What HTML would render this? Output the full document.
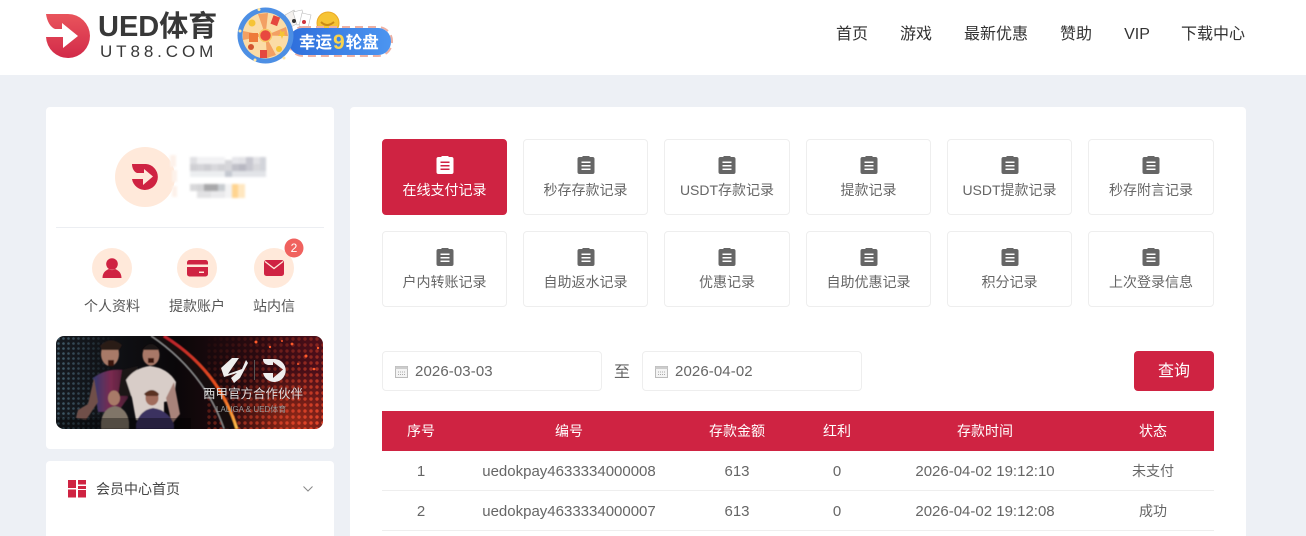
<!DOCTYPE html>
<html lang="zh-CN">
<head>
<meta charset="utf-8">
<title>UED体育</title>
<style>
*{box-sizing:border-box;margin:0;padding:0}
html,body{width:1306px;height:536px;overflow:hidden;background:#edf0f5;font-family:"Liberation Sans","Noto Sans CJK SC",sans-serif;color:#666}
#root{position:relative;width:1306px;height:536px;overflow:hidden;background:#edf0f5}
.a{position:absolute}
.t{position:absolute;white-space:nowrap;text-align:center;transform:translate(-50%,-50%);line-height:20px}
.nav{font-size:16px;color:#333;top:35px}
.item{position:absolute;height:76px;border:1px solid #eee;border-radius:4px;background:#fff;text-align:center;font-size:14px;color:#666}
.item svg{position:absolute;left:50%;margin-left:-9px;top:15px;color:#666}
.item span{position:absolute;left:0;right:0;top:40px;line-height:20px;white-space:nowrap}
.item.on{background:#cf2342;border-color:#cf2342;color:#fff}
.item.on svg{color:#fff}
.inp{position:absolute;top:351px;width:220px;height:40px;border:1px solid #eee;border-radius:4px;background:#fff;font-size:15px;line-height:40px;padding-left:32px;color:#666;letter-spacing:.1px}
.inp svg{position:absolute;left:12px;top:13px}
.th{font-size:14px;color:#fff;top:431px}
.td{font-size:15px;color:#666}
.cn{font-size:14px}
</style>
</head>
<body>
<div id="root">
<svg width="0" height="0" style="position:absolute"><defs>
<symbol id="clip" viewBox="0 0 18 20"><path fill="currentColor" fill-rule="evenodd" d="M2.500 2H5.500V1H12.500V2H15.500A2 2 0 0 1 17.500 4V17A2 2 0 0 1 15.500 19H2.500A2 2 0 0 1 .5 17V4A2 2 0 0 1 2.500 2ZM4.500 6.500V8H13.500V6.500ZM4.500 10V11.500H13.500V10ZM4.500 13.500V15H13.500V13.500Z"/></symbol>
<symbol id="cal" viewBox="0 0 13 13"><rect x=".5" y="1.500" width="12" height="11" fill="#f4f4f4" stroke="#bbb"/><rect x=".5" y="1.500" width="12" height="2.500" fill="#ccc"/><path d="M3 7h7M3 9.500h7" stroke="#aaa" stroke-dasharray="1 1"/></symbol>
</defs></svg>

<div class="a" style="left:0;top:0;width:1306px;height:75px;background:#fff"></div>

<svg class="a" style="left:40px;top:5px" width="60" height="60" viewBox="40 5 60 60">
<defs><linearGradient id="lg" x1="0" y1="0" x2="0" y2="1"><stop offset="0" stop-color="#e9545c"/><stop offset="1" stop-color="#d22a49"/></linearGradient></defs>
<path fill="url(#lg)" d="M46 14H68A22 22 0 1 1 46 37H63V48L78 36L62 23V29H55C50 27 47 21 46 14Z"/>
</svg>
<div class="a" style="left:98px;top:9px;font-size:29px;line-height:36px;font-weight:bold;color:#383838;white-space:nowrap">UED体育</div>
<div class="a" style="left:100px;top:41px;font-size:17px;line-height:21px;color:#383838;letter-spacing:3.900px;white-space:nowrap">UT88.COM</div>

<svg class="a" style="left:235px;top:0" width="165" height="70" viewBox="235 0 165 70">
<defs><linearGradient id="pill" x1="0" x2="1" y1="0" y2="0"><stop offset="0" stop-color="#2f6fdc"/><stop offset="1" stop-color="#4c95f0"/></linearGradient></defs>
<path d="M285 15l9-5 6 12-9 5z" fill="#f4f1ee" stroke="#bbb" stroke-width=".6"/>
<path d="M293 12l9-2 4 13-9 2z" fill="#fff" stroke="#bbb" stroke-width=".6"/>
<path d="M302 13l9 2-3 13-9-2z" fill="#fff" stroke="#bbb" stroke-width=".6"/>
<circle cx="294" cy="21" r="2" fill="#333"/><circle cx="304" cy="22" r="2" fill="#d0343e"/>
<circle cx="328" cy="23" r="11" fill="#f6c435" stroke="#eba925"/>
<path d="M321 22q6 6 13 0" stroke="#c98a18" stroke-width="2" fill="none"/>
<rect x="289" y="27" width="103" height="29" rx="14" fill="none" stroke="#ecb0a4" stroke-width="2" stroke-dasharray="8 5"/>
<rect x="289" y="28" width="102" height="27" rx="13" fill="url(#pill)"/>
<circle cx="265.500" cy="35.500" r="28" fill="#4d8fe4"/>
<circle cx="265.500" cy="35.500" r="23" fill="#fbdca6"/>
<path d="M265.500 35.500L258 14l10-1zM265.500 35.500L286 27l2 9zM265.500 35.500L276 55l-9 3zM265.500 35.500L243 40l0-9z" fill="#f3a063"/>
<circle cx="265.500" cy="35.500" r="6" fill="#e8483f" stroke="#f7c763" stroke-width="1.500"/>
<rect x="272" y="16" width="7" height="9" fill="#e5483f" transform="rotate(20 275 20)"/>
<rect x="249" y="33" width="9" height="9" fill="#ee7a3a"/>
<rect x="260" y="50" width="7" height="8" fill="#e5483f"/>
<circle cx="252" cy="23" r="3.500" fill="#f6c435"/><circle cx="279" cy="49" r="3" fill="#f6c435"/>
<circle cx="251" cy="47" r="3" fill="#d1542f"/><path d="M280 30l2 2 3-1-1 3 2 2-3 0-1 3-1-3-3 0 2-2z" fill="#f6c435"/>
<circle cx="240" cy="31" r="1.500" fill="#ffe7a6"/><circle cx="259" cy="9.500" r="1.500" fill="#ffe7a6"/><circle cx="284" cy="58" r="1.500" fill="#ffe7a6"/><circle cx="255" cy="60" r="1.500" fill="#ffe7a6"/>
<text x="299" y="48" font-size="16.500" font-weight="bold" fill="#fff" font-family="'Liberation Sans','Noto Sans CJK SC',sans-serif">幸运<tspan fill="#f9d34e" font-size="21" dx="1" dy="1">9</tspan><tspan dx="1" dy="-1">轮盘</tspan></text>
</svg>

<div class="t nav" style="left:852px">首页</div>
<div class="t nav" style="left:916px">游戏</div>
<div class="t nav" style="left:996px">最新优惠</div>
<div class="t nav" style="left:1076px">赞助</div>
<div class="t nav" style="left:1137px">VIP</div>
<div class="t nav" style="left:1213px">下载中心</div>

<!-- left cards -->
<div class="a" style="left:46px;top:107px;width:288px;height:342px;background:#fff;border-radius:4px"></div>
<div class="a" style="left:46px;top:461px;width:288px;height:90px;background:#fff;border-radius:4px"></div>

<svg class="a" style="left:115px;top:147px" width="60" height="60" viewBox="115 147 60 60">
<circle cx="145" cy="177" r="30" fill="#ffe9da"/>
<path fill="#cf2342" d="M132 164H146A13 13 0 1 1 132 179H143V185L153 176.500L144 169V173H137C134 172 132 168 132 164Z"/>
</svg>

<!-- blurred user name -->
<svg class="a" style="left:165px;top:145px;filter:blur(1px)" width="115" height="65" viewBox="165 145 115 65">
<g fill="#fdf1ea"><rect x="170" y="155" width="6" height="12"/><rect x="172" y="170" width="5" height="12"/><rect x="172" y="186" width="5" height="11"/></g>
<rect x="190" y="157" width="7" height="7" fill="#e0e0e3"/><rect x="190" y="164" width="7" height="7" fill="#d0d0d4"/>
<rect x="197" y="157" width="28" height="7" fill="#f1f1f3"/>
<rect x="197" y="164" width="7" height="7" fill="#d4d4d8"/><rect x="204" y="164" width="7" height="7" fill="#cdcdd2"/>
<rect x="211" y="164" width="7" height="7" fill="#d8d8dc"/><rect x="218" y="164" width="7" height="7" fill="#d2d2d6"/>
<rect x="225" y="160" width="7" height="11" fill="#d6d6da"/><rect x="232" y="157" width="7" height="7" fill="#e6e6ea"/>
<rect x="232" y="164" width="7" height="7" fill="#c0c0c8"/><rect x="239" y="157" width="7" height="7" fill="#e2e2e6"/>
<rect x="239" y="164" width="7" height="7" fill="#b8b8c2"/><rect x="246" y="157" width="7" height="14" fill="#c8c8d0"/>
<rect x="253" y="157" width="7" height="7" fill="#e2e2e6"/><rect x="253" y="164" width="7" height="7" fill="#d8d8dc"/>
<rect x="260" y="157" width="6" height="14" fill="#d2d4da"/>
<rect x="190" y="171" width="35" height="6" fill="#eceef0"/><rect x="225" y="171" width="7" height="6" fill="#c4c8d0"/><rect x="232" y="171" width="34" height="6" fill="#e2e4e8"/>
<rect x="190" y="184" width="7" height="7" fill="#d8d8da"/><rect x="197" y="184" width="7" height="7" fill="#d4d4d6"/><rect x="204" y="184" width="14" height="7" fill="#a8a8aa"/><rect x="218" y="184" width="7" height="7" fill="#c8ccd0"/>
<rect x="197" y="191" width="14" height="7" fill="#e2e2e4"/><rect x="211" y="191" width="14" height="7" fill="#eaeaec"/>
<rect x="225" y="184" width="7" height="14" fill="#f3f3f4"/>
<rect x="232" y="184" width="6" height="14" fill="#ffd48f"/><rect x="238" y="184" width="7" height="14" fill="#ffe7c0"/>
</svg>

<div class="a" style="left:56px;top:227px;width:268px;height:1px;background:#eceef2"></div>

<svg class="a" style="left:90px;top:236px" width="240" height="54" viewBox="90 236 240 54">
<circle cx="112" cy="268" r="20" fill="#ffe9da"/>
<circle cx="112" cy="264" r="5.800" fill="#cf2342"/>
<path d="M102.500 278c0-6 4-8 6.500-9 2 1.500 4 1.500 6 0 2.500 1 6.500 3 6.500 9z" fill="#cf2342"/>
<circle cx="197" cy="268" r="20" fill="#ffe9da"/>
<rect x="187" y="260" width="21" height="16.500" rx="2.500" fill="#cf2342"/>
<rect x="187" y="264.500" width="21" height="2.500" fill="#ffe9da"/>
<rect x="199" y="271.500" width="5" height="1.500" fill="#ffe9da"/>
<circle cx="274" cy="268" r="20" fill="#ffe9da"/>
<rect x="264" y="260" width="20" height="16" rx="2.500" fill="#cf2342"/>
<path d="M265 261.500l9 7 9-7" fill="none" stroke="#ffe9da" stroke-width="1.300"/>
<circle cx="294" cy="248" r="9.500" fill="#f0625f"/>
</svg>
<div class="t" style="left:294px;top:248px;font-size:12px;color:#fff">2</div>

<div class="t" style="left:112px;top:306px;font-size:14px;color:#555">个人资料</div>
<div class="t" style="left:197px;top:306px;font-size:14px;color:#555">提款账户</div>
<div class="t" style="left:274px;top:306px;font-size:14px;color:#555">站内信</div>

<!-- banner -->
<svg class="a" style="left:56px;top:336px;border-radius:8px" width="267" height="93" viewBox="0 0 267 93">
<defs>
<linearGradient id="bg" x1="0" x2="1" y1="0" y2="0"><stop offset="0" stop-color="#151a20"/><stop offset=".45" stop-color="#0a0709"/><stop offset=".75" stop-color="#2a0a10"/><stop offset="1" stop-color="#4f0f1a"/></linearGradient>
<pattern id="d1" width="5" height="5" patternUnits="userSpaceOnUse"><circle cx="2.500" cy="2.500" r="1.300" fill="#4a6878"/></pattern>
<pattern id="d2" width="6" height="6" patternUnits="userSpaceOnUse"><circle cx="3" cy="3" r="1.700" fill="#f04a2c"/></pattern>
<linearGradient id="fl" x1="0" x2="1" y1="0" y2="0"><stop offset="0" stop-color="#fff" stop-opacity=".9"/><stop offset="1" stop-color="#fff" stop-opacity="0"/></linearGradient>
<linearGradient id="fr" x1="0" x2="1" y1="0" y2="1"><stop offset="0" stop-color="#fff" stop-opacity="0"/><stop offset=".5" stop-color="#fff" stop-opacity=".35"/><stop offset="1" stop-color="#fff" stop-opacity=".95"/></linearGradient>
<linearGradient id="o" x1="0" x2="0" y1="0" y2="1"><stop offset="0" stop-color="#b8202c"/><stop offset=".6" stop-color="#f0581c"/><stop offset="1" stop-color="#ffc04a"/></linearGradient>
<linearGradient id="jer" x1="0" x2="1" y1="0" y2="0"><stop offset="0" stop-color="#343a70"/><stop offset=".5" stop-color="#7a2a50"/><stop offset="1" stop-color="#4a1e34"/></linearGradient>
<radialGradient id="glow" cx=".75" cy=".95" r=".6"><stop offset="0" stop-color="#d84018" stop-opacity=".55"/><stop offset="1" stop-color="#d84018" stop-opacity="0"/></radialGradient>
<mask id="ml"><rect width="60" height="93" fill="url(#fl)"/></mask>
<mask id="mr"><rect x="150" width="117" height="93" fill="url(#fr)"/></mask>
<filter id="sb"><feGaussianBlur stdDeviation=".6"/></filter>
</defs>
<rect width="267" height="93" fill="url(#bg)"/>
<rect x="150" width="117" height="93" fill="url(#glow)"/>
<rect width="60" height="93" fill="url(#d1)" mask="url(#ml)"/>
<rect x="150" width="117" height="93" fill="url(#d2)" mask="url(#mr)"/>
<g fill="#ff5a2a"><circle cx="200" cy="6" r="1.500"/><circle cx="214" cy="11" r="1.200"/><circle cx="236" cy="8" r="1.400"/><circle cx="250" cy="20" r="1.500"/><circle cx="258" cy="33" r="1.300"/><circle cx="242" cy="28" r="1"/><circle cx="226" cy="5" r="1"/><circle cx="262" cy="12" r="1.200"/></g>
<g filter="url(#sb)">
<path d="M95 0Q148 36 168 93H181Q160 32 108 0Z" fill="#141010"/>
<path d="M95 0Q148 36 168 93" fill="none" stroke="#8a8a8a" stroke-width="1.500"/>
<path d="M108 0Q163 34 181 93" fill="none" stroke="url(#o)" stroke-width="3"/>
<path d="M37 42Q50 32 68 34L72 62L62 76H42Z" fill="url(#jer)"/>
<path d="M38 42L32 68L22 74L20 82L30 84L42 66Z" fill="#6f5048"/>
<path d="M66 34L82 30L76 60H62Z" fill="#1a1618"/>
<ellipse cx="54" cy="18" rx="9" ry="12" fill="#a87a68"/>
<path d="M44 10Q54 -1 66 9L63 14H46Z" fill="#2a1c18"/>
<path d="M52 24h6v6h-6z" fill="#3a1410"/>
<path d="M70 44Q78 32 94 30Q112 32 120 46L118 64L108 66L108 84H80L76 62Z" fill="#d8cdc8"/>
<path d="M118 46L124 78L116 88L110 62Z" fill="#a8837a"/>
<ellipse cx="95" cy="19" rx="8.500" ry="10.500" fill="#a87868"/>
<path d="M86 14Q95 2 104 14H88Z" fill="#1a1212"/>
<path d="M92 22h6v5h-6z" fill="#3a1410"/>
<path d="M45 86Q47 72 59 70Q71 72 73 86V93H45Z" fill="#807468"/>
<ellipse cx="58" cy="62" rx="6" ry="7.500" fill="#a87a68"/>
<path d="M80 88Q84 74 97 72Q112 74 118 88V93H80Z" fill="#3a3060"/>
<ellipse cx="96" cy="62" rx="6.500" ry="7.500" fill="#a06c5c"/>
<path d="M88 58Q96 50 103 58L102 60H90Z" fill="#5a3020"/>
</g>
<rect y="82" width="135" height="11" fill="#000" opacity=".35"/>
<path d="M165 32L176 22H183L176 32L172 38L186 33L190 24L192 27L184 42L178 47L175 42L181 37L168 41Z" fill="#eee"/>
<rect x="198" y="24" width="1" height="20" fill="#555"/>
<path d="M207 23H219A11.500 11.500 0 1 1 207 37H217V42L227 33.500L217 26V29H212C209 28 207 27 207 23Z" fill="#eee"/>
<text x="147" y="62" font-size="12.500" fill="#ddd" font-family="'Liberation Sans','Noto Sans CJK SC',sans-serif">西甲官方合作伙伴</text>
<text x="160" y="76" font-size="8" fill="#9a9a9a" font-family="'Liberation Sans','Noto Sans CJK SC',sans-serif">LALIGA &amp; UED体育</text>
</svg>

<!-- menu -->
<svg class="a" style="left:68px;top:480px" width="18" height="18" viewBox="0 0 18 18">
<path fill="#cf2342" d="M0 0h8v8H0zM10 0h8v4.500h-8zM10 6h8v3h-8zM0 9.500h8v8H0zM10 10h8v7.500h-8z"/>
</svg>
<div class="a" style="left:96px;top:479px;font-size:14px;line-height:20px;color:#444;white-space:nowrap">会员中心首页</div>
<svg class="a" style="left:302px;top:485px" width="12" height="8" viewBox="0 0 12 8"><path d="M1.500 1.500L6 6L10.500 1.500" fill="none" stroke="#888" stroke-width="1"/></svg>

<!-- main -->
<div class="a" style="left:350px;top:107px;width:896px;height:440px;background:#fff;border-radius:4px"></div>

<div class="item on" style="left:382px;top:139px;width:125px"><svg width="18" height="20"><use href="#clip"/></svg><span>在线支付记录</span></div>
<div class="item" style="left:523px;top:139px;width:125px"><svg width="18" height="20"><use href="#clip"/></svg><span>秒存存款记录</span></div>
<div class="item" style="left:664px;top:139px;width:126px"><svg width="18" height="20"><use href="#clip"/></svg><span>USDT存款记录</span></div>
<div class="item" style="left:806px;top:139px;width:125px"><svg width="18" height="20"><use href="#clip"/></svg><span>提款记录</span></div>
<div class="item" style="left:947px;top:139px;width:125px"><svg width="18" height="20"><use href="#clip"/></svg><span>USDT提款记录</span></div>
<div class="item" style="left:1088px;top:139px;width:126px"><svg width="18" height="20"><use href="#clip"/></svg><span>秒存附言记录</span></div>

<div class="item" style="left:382px;top:231px;width:125px"><svg width="18" height="20"><use href="#clip"/></svg><span>户内转账记录</span></div>
<div class="item" style="left:523px;top:231px;width:125px"><svg width="18" height="20"><use href="#clip"/></svg><span>自助返水记录</span></div>
<div class="item" style="left:664px;top:231px;width:126px"><svg width="18" height="20"><use href="#clip"/></svg><span>优惠记录</span></div>
<div class="item" style="left:806px;top:231px;width:125px"><svg width="18" height="20"><use href="#clip"/></svg><span>自助优惠记录</span></div>
<div class="item" style="left:947px;top:231px;width:125px"><svg width="18" height="20"><use href="#clip"/></svg><span>积分记录</span></div>
<div class="item" style="left:1088px;top:231px;width:126px"><svg width="18" height="20"><use href="#clip"/></svg><span>上次登录信息</span></div>

<div class="inp" style="left:382px"><svg width="13" height="13"><use href="#cal"/></svg>2026-03-03</div>
<div class="t" style="left:622px;top:373px;font-size:16px;color:#666">至</div>
<div class="inp" style="left:642px"><svg width="13" height="13"><use href="#cal"/></svg>2026-04-02</div>
<div class="a" style="left:1134px;top:351px;width:80px;height:40px;background:#cf2342;border-radius:4px;color:#fff;font-size:16px;line-height:41px;text-align:center">查询</div>

<div class="a" style="left:382px;top:411px;width:832px;height:40px;background:#cf2342"></div>
<div class="t th" style="left:421px">序号</div>
<div class="t th" style="left:569px">编号</div>
<div class="t th" style="left:737px">存款金额</div>
<div class="t th" style="left:837px">红利</div>
<div class="t th" style="left:985px">存款时间</div>
<div class="t th" style="left:1153px">状态</div>

<div class="a" style="left:382px;top:490px;width:832px;height:1px;background:#eee"></div>
<div class="a" style="left:382px;top:530px;width:832px;height:1px;background:#eee"></div>

<div class="t td" style="left:421px;top:472px">1</div>
<div class="t td" style="left:569px;top:472px">uedokpay4633334000008</div>
<div class="t td" style="left:737px;top:472px">613</div>
<div class="t td" style="left:837px;top:472px">0</div>
<div class="t td" style="left:985px;top:472px">2026-04-02 19:12:10</div>
<div class="t td cn" style="left:1153px;top:471px">未支付</div>

<div class="t td" style="left:421px;top:512px">2</div>
<div class="t td" style="left:569px;top:512px">uedokpay4633334000007</div>
<div class="t td" style="left:737px;top:512px">613</div>
<div class="t td" style="left:837px;top:512px">0</div>
<div class="t td" style="left:985px;top:512px">2026-04-02 19:12:08</div>
<div class="t td cn" style="left:1153px;top:511px">成功</div>
</div>
</body>
</html>
